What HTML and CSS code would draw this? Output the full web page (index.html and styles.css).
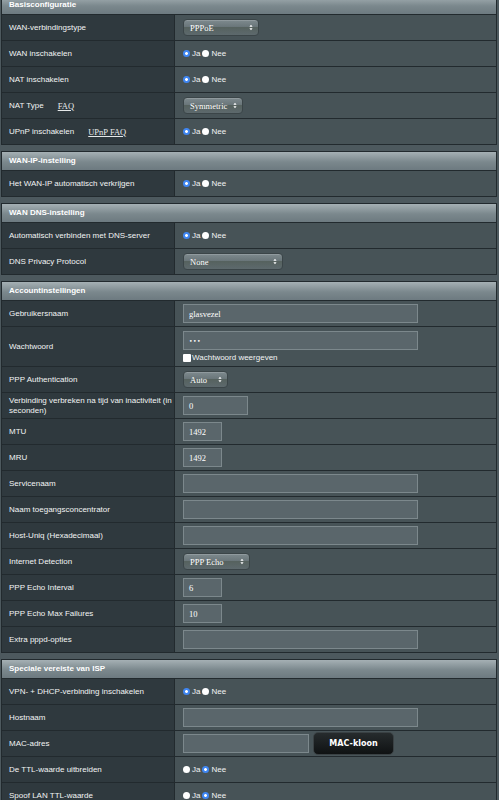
FILE: index.html
```html
<!doctype html>
<html lang="nl">
<head>
    <meta charset="UTF-8" />
    <title>WAN</title>
    <link rel="stylesheet" href="styles.css">
</head>
<body>
<div class="page">
    <div class="section first">
        <div class="head">Basisconfiguratie</div>
        <div class="row">
            <div class="label">WAN-verbindingstype</div>
            <div class="value"><span class="select w75">PPPoE<svg class="arr" viewBox="0 0 5 8"><path d="M2.5 0.5 L4.5 3 H0.5 Z M2.5 7.5 L4.5 5 H0.5 Z" /></svg></span></div>
        </div>
        <div class="row">
            <div class="label">WAN inschakelen</div>
            <div class="value"><span class="radio on"></span><span class="opt">Ja</span><span class="radio"></span><span class="opt">Nee</span></div>
        </div>
        <div class="row">
            <div class="label">NAT inschakelen</div>
            <div class="value"><span class="radio on"></span><span class="opt">Ja</span><span class="radio"></span><span class="opt">Nee</span></div>
        </div>
        <div class="row">
            <div class="label">NAT Type <a class="faq">FAQ</a></div>
            <div class="value"><span class="select w60">Symmetric<svg class="arr" viewBox="0 0 5 8"><path d="M2.5 0.5 L4.5 3 H0.5 Z M2.5 7.5 L4.5 5 H0.5 Z" /></svg></span></div>
        </div>
        <div class="row">
            <div class="label">UPnP inschakelen <a class="faq">UPnP FAQ</a></div>
            <div class="value"><span class="radio on"></span><span class="opt">Ja</span><span class="radio"></span><span class="opt">Nee</span></div>
        </div>
    </div>

    <div class="section">
        <div class="head">WAN-IP-instelling</div>
        <div class="row">
            <div class="label">Het WAN-IP automatisch verkrijgen</div>
            <div class="value"><span class="radio on"></span><span class="opt">Ja</span><span class="radio"></span><span class="opt">Nee</span></div>
        </div>
    </div>

    <div class="section">
        <div class="head">WAN DNS-instelling</div>
        <div class="row">
            <div class="label">Automatisch verbinden met DNS-server</div>
            <div class="value"><span class="radio on"></span><span class="opt">Ja</span><span class="radio"></span><span class="opt">Nee</span></div>
        </div>
        <div class="row">
            <div class="label">DNS Privacy Protocol</div>
            <div class="value"><span class="select w99">None<svg class="arr" viewBox="0 0 5 8"><path d="M2.5 0.5 L4.5 3 H0.5 Z M2.5 7.5 L4.5 5 H0.5 Z" /></svg></span></div>
        </div>
    </div>

    <div class="section">
        <div class="head">Accountinstellingen</div>
        <div class="row">
            <div class="label">Gebruikersnaam</div>
            <div class="value"><span class="input long">glasvezel</span></div>
        </div>
        <div class="row tall">
            <div class="label">Wachtwoord</div>
            <div class="value stack">
                <span class="input long dots">&bull;&bull;&bull;</span>
                <span class="check"><span class="box"></span>Wachtwoord weergeven</span>
            </div>
        </div>
        <div class="row">
            <div class="label">PPP Authentication</div>
            <div class="value"><span class="select w44">Auto<svg class="arr" viewBox="0 0 5 8"><path d="M2.5 0.5 L4.5 3 H0.5 Z M2.5 7.5 L4.5 5 H0.5 Z" /></svg></span></div>
        </div>
        <div class="row">
            <div class="label">Verbinding verbreken na tijd van inactiviteit (in seconden)</div>
            <div class="value"><span class="input mid">0</span></div>
        </div>
        <div class="row">
            <div class="label">MTU</div>
            <div class="value"><span class="input short">1492</span></div>
        </div>
        <div class="row">
            <div class="label">MRU</div>
            <div class="value"><span class="input short">1492</span></div>
        </div>
        <div class="row">
            <div class="label">Servicenaam</div>
            <div class="value"><span class="input long"></span></div>
        </div>
        <div class="row">
            <div class="label">Naam toegangsconcentrator</div>
            <div class="value"><span class="input long"></span></div>
        </div>
        <div class="row">
            <div class="label">Host-Uniq (Hexadecimaal)</div>
            <div class="value"><span class="input long"></span></div>
        </div>
        <div class="row">
            <div class="label">Internet Detection</div>
            <div class="value"><span class="select w66">PPP Echo<svg class="arr" viewBox="0 0 5 8"><path d="M2.5 0.5 L4.5 3 H0.5 Z M2.5 7.5 L4.5 5 H0.5 Z" /></svg></span></div>
        </div>
        <div class="row">
            <div class="label">PPP Echo Interval</div>
            <div class="value"><span class="input short">6</span></div>
        </div>
        <div class="row">
            <div class="label">PPP Echo Max Failures</div>
            <div class="value"><span class="input short">10</span></div>
        </div>
        <div class="row">
            <div class="label">Extra pppd-opties</div>
            <div class="value"><span class="input long"></span></div>
        </div>
    </div>

    <div class="section">
        <div class="head">Speciale vereiste van ISP</div>
        <div class="row">
            <div class="label">VPN- + DHCP-verbinding inschakelen</div>
            <div class="value"><span class="radio on"></span><span class="opt">Ja</span><span class="radio"></span><span class="opt">Nee</span></div>
        </div>
        <div class="row">
            <div class="label">Hostnaam</div>
            <div class="value"><span class="input long"></span></div>
        </div>
        <div class="row">
            <div class="label">MAC-adres</div>
            <div class="value"><span class="input mac"></span><button type="button" class="btn">MAC-kloon</button></div>
        </div>
        <div class="row">
            <div class="label">De TTL-waarde uitbreiden</div>
            <div class="value"><span class="radio"></span><span class="opt">Ja</span><span class="radio on"></span><span class="opt">Nee</span></div>
        </div>
        <div class="row">
            <div class="label">Spoof LAN TTL-waarde</div>
            <div class="value"><span class="radio"></span><span class="opt">Ja</span><span class="radio on"></span><span class="opt">Nee</span></div>
        </div>
    </div>
</div>
</body>
</html>
```

FILE: styles.css
```css
html,body {
    margin: 0;
    padding: 0;
    background: #4d595e;
}
body {
    font-family: "Liberation Sans", Arial, sans-serif;
    font-size: 8px;
    color: #f2f4f4;
}
.page {
    padding: 0 2px 0 1px;
}
.section {
    border: 1px solid #222a2e;
    margin-bottom: 6px;
    background: #475357;
}
.section.first {
    margin-top: -5px;
}
.head {
    height: 18px;
    line-height: 18px;
    padding-left: 7px;
    font-weight: bold;
    color: #fff;
    background: linear-gradient(#a5b0b4, #7b888d 55%, #6d7a80);
    border-bottom: 1px solid #222a2e;
}
.row {
    display: grid;
    grid-template-columns: 173px 1fr;
    height: 25px;
    border-top: 1px solid #222a2e;
}
.head + .row {
    border-top: none;
}
.row.tall {
    height: 39px;
}
.label {
    display: flex;
    align-items: center;
    padding: 0 0 0 7px;
    background: #2f393e;
    border-right: 1px solid #222a2e;
    line-height: 10px;
}
.value {
    display: flex;
    align-items: center;
    padding-left: 8px;
}
.value.stack {
    flex-direction: column;
    align-items: flex-start;
    justify-content: center;
    gap: 3px;
}
.faq {
    margin-left: 14px;
    font-family: "Liberation Serif", "Times New Roman", serif;
    font-size: 8.5px;
    text-decoration: underline;
    color: #e6e9ea;
}
.radio {
    width: 7px;
    height: 7px;
    border-radius: 50%;
    background: #fff;
    flex: none;
}
.radio.on {
    background: radial-gradient(circle, #fff 0 1.2px, #3f86f2 1.6px);
}
.opt {
    margin: 0 2px;
}
.select {
    display: inline-flex;
    align-items: center;
    justify-content: space-between;
    box-sizing: border-box;
    height: 17px;
    padding: 0 5px 0 6px;
    border-radius: 4px;
    border: 1px solid #3b4548;
    background: linear-gradient(#7e8a8e, #6a767a 45%, #56625f 50%, #5d696d);
    box-shadow: inset 0 1px 0 rgba(255,255,255,0.15);
    font-family: "Liberation Serif", "Times New Roman", serif;
    font-size: 8.5px;
    color: #fff;
}
.select .arr {
    width: 4px;
    height: 7px;
    fill: #fff;
}
.w75 { width: 76px; }
.w60 { width: 60px; }
.w99 { width: 100px; }
.w44 { width: 45px; }
.w66 { width: 67px; }
.input {
    display: inline-flex;
    align-items: center;
    box-sizing: border-box;
    height: 19px;
    padding-left: 5px;
    background: #5a666b;
    border: 1px solid #7c888c;
    font-family: "Liberation Serif", "Times New Roman", serif;
    font-size: 8.5px;
    color: #fff;
}
.input.long { width: 235px; }
.input.mid { width: 65px; }
.input.short { width: 39px; }
.input.mac { width: 126px; }
.input.dots {
    font-family: "DejaVu Sans", sans-serif;
    font-size: 6px;
    letter-spacing: 0.5px;
}
.check {
    display: flex;
    align-items: center;
    gap: 1px;
}
.check .box {
    width: 8px;
    height: 8px;
    background: #fff;
    border-radius: 1px;
}
.btn {
    margin-left: 4px;
    width: 81px;
    height: 23px;
    border: 1px solid #3a4144;
    border-radius: 5px;
    background: linear-gradient(#262b2d, #0f1213);
    color: #fff;
    font-family: "DejaVu Sans", Verdana, sans-serif;
    font-weight: bold;
    font-size: 8px;
    padding: 0;
}
```
